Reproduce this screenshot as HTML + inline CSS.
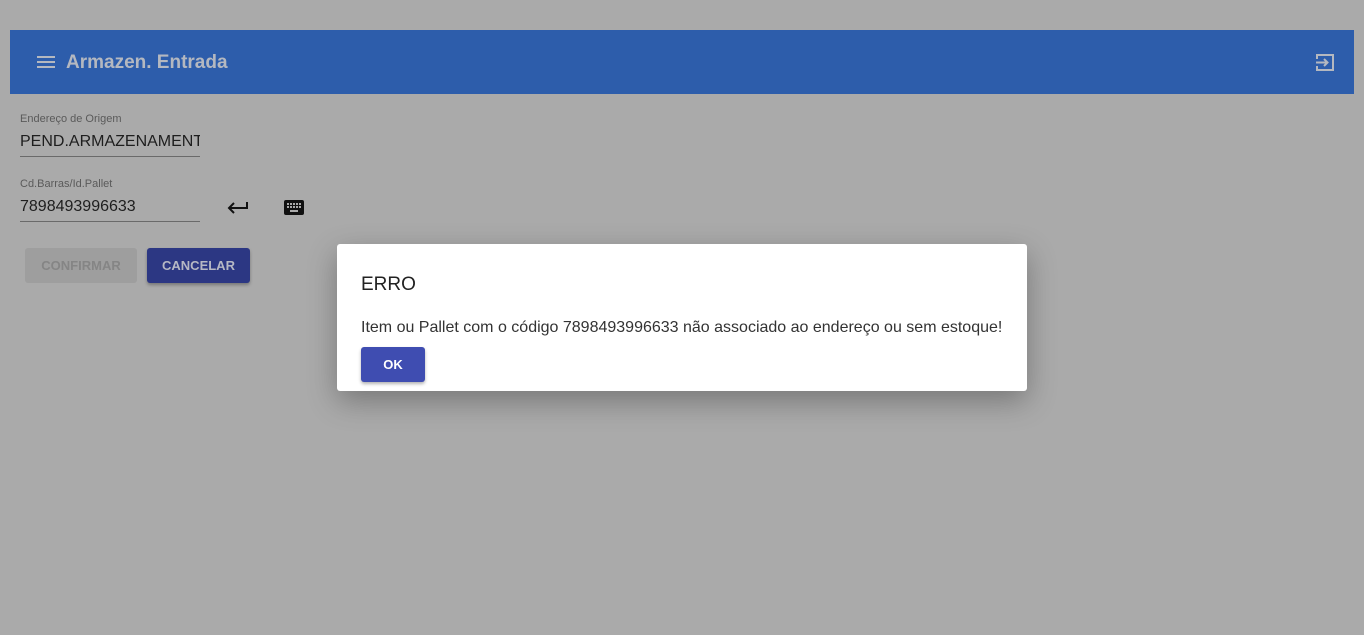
<!DOCTYPE html>
<html><head><meta charset="utf-8"><style>
*{box-sizing:border-box;margin:0;padding:0}
body{width:1364px;height:635px;background:#aaaaaa;font-family:"Liberation Sans",sans-serif;position:relative;overflow:hidden}
.hdr{position:absolute;left:10px;top:30px;width:1344px;height:64px;background:#2d5dab}
.hdr .t{position:absolute;left:56px;top:22px;font-size:19px;font-weight:bold;color:#b4b8c0}
.lbl{position:absolute;left:20px;font-size:11px;color:#5a5a5a}
.val{position:absolute;left:20px;font-size:16px;color:#1e1e1e;width:180px;overflow:hidden;white-space:nowrap}
.line{position:absolute;left:20px;width:180px;height:1px;background:#6a6a6a}
.btn{position:absolute;height:35px;border-radius:3px;font-size:13px;font-weight:bold;text-align:center;line-height:35px}
.dlg{position:absolute;left:337px;top:244px;width:690px;height:147px;background:#fff;border-radius:3px;box-shadow:0 10px 30px rgba(0,0,0,.3)}
</style></head><body>
<div class="hdr">
<svg style="position:absolute;left:27px;top:25px" width="18" height="14"><rect y="1" width="18" height="2" fill="#b4b8c0"/><rect y="6" width="18" height="2" fill="#b4b8c0"/><rect y="11" width="18" height="2" fill="#b4b8c0"/></svg>
<div class="t">Armazen. Entrada</div>
<svg style="position:absolute;left:1306px;top:23px" width="19" height="19" viewBox="0 0 19 19" fill="none" stroke="#b4b8c0" stroke-width="2"><path d="M1 6V2h16v15H1v-4"/><path d="M0 9.5h11M8 6l3.5 3.5L8 13"/></svg>
</div>
<div class="lbl" style="top:113px">Endereço de Origem</div>
<div class="val" style="top:133px">PEND.ARMAZENAMENTO</div>
<div class="line" style="top:156px"></div>
<div class="lbl" style="top:178px">Cd.Barras/Id.Pallet</div>
<div class="val" style="top:198px">7898493996633</div>
<div class="line" style="top:221px"></div>
<svg style="position:absolute;left:227px;top:200px" width="22" height="16" viewBox="0 0 22 16" fill="none" stroke="#111" stroke-width="2"><path d="M20 2v6H3M7 3L2 8l5 5"/></svg>
<svg style="position:absolute;left:284px;top:200px" width="20" height="16"><rect width="20" height="15" rx="2" fill="#111"/><g fill="#aaa"><rect x="3" y="3" width="2" height="2"/><rect x="6" y="3" width="2" height="2"/><rect x="9" y="3" width="2" height="2"/><rect x="12" y="3" width="2" height="2"/><rect x="15" y="3" width="2" height="2"/><rect x="3" y="6" width="2" height="2"/><rect x="6" y="6" width="2" height="2"/><rect x="9" y="6" width="2" height="2"/><rect x="12" y="6" width="2" height="2"/><rect x="15" y="6" width="2" height="2"/><rect x="6" y="10" width="8" height="2"/></g></svg>
<div class="btn" style="left:25px;top:248px;width:112px;background:#9e9e9e;color:#858585">CONFIRMAR</div>
<div class="btn" style="left:147px;top:248px;width:103px;background:#2c3783;color:#b6b8c4;box-shadow:0 2px 3px rgba(0,0,0,.3)">CANCELAR</div>
<div class="dlg">
<div style="position:absolute;left:24px;top:30px;font-size:19px;color:#222">ERRO</div>
<div style="position:absolute;left:24px;top:75px;font-size:16px;color:#333;white-space:nowrap">Item ou Pallet com o código 7898493996633 não associado ao endereço ou sem estoque!</div>
<div class="btn" style="left:24px;top:103px;width:64px;background:#3f4db1;color:#fff;box-shadow:0 2px 3px rgba(0,0,0,.3)">OK</div>
</div>
</body></html>
